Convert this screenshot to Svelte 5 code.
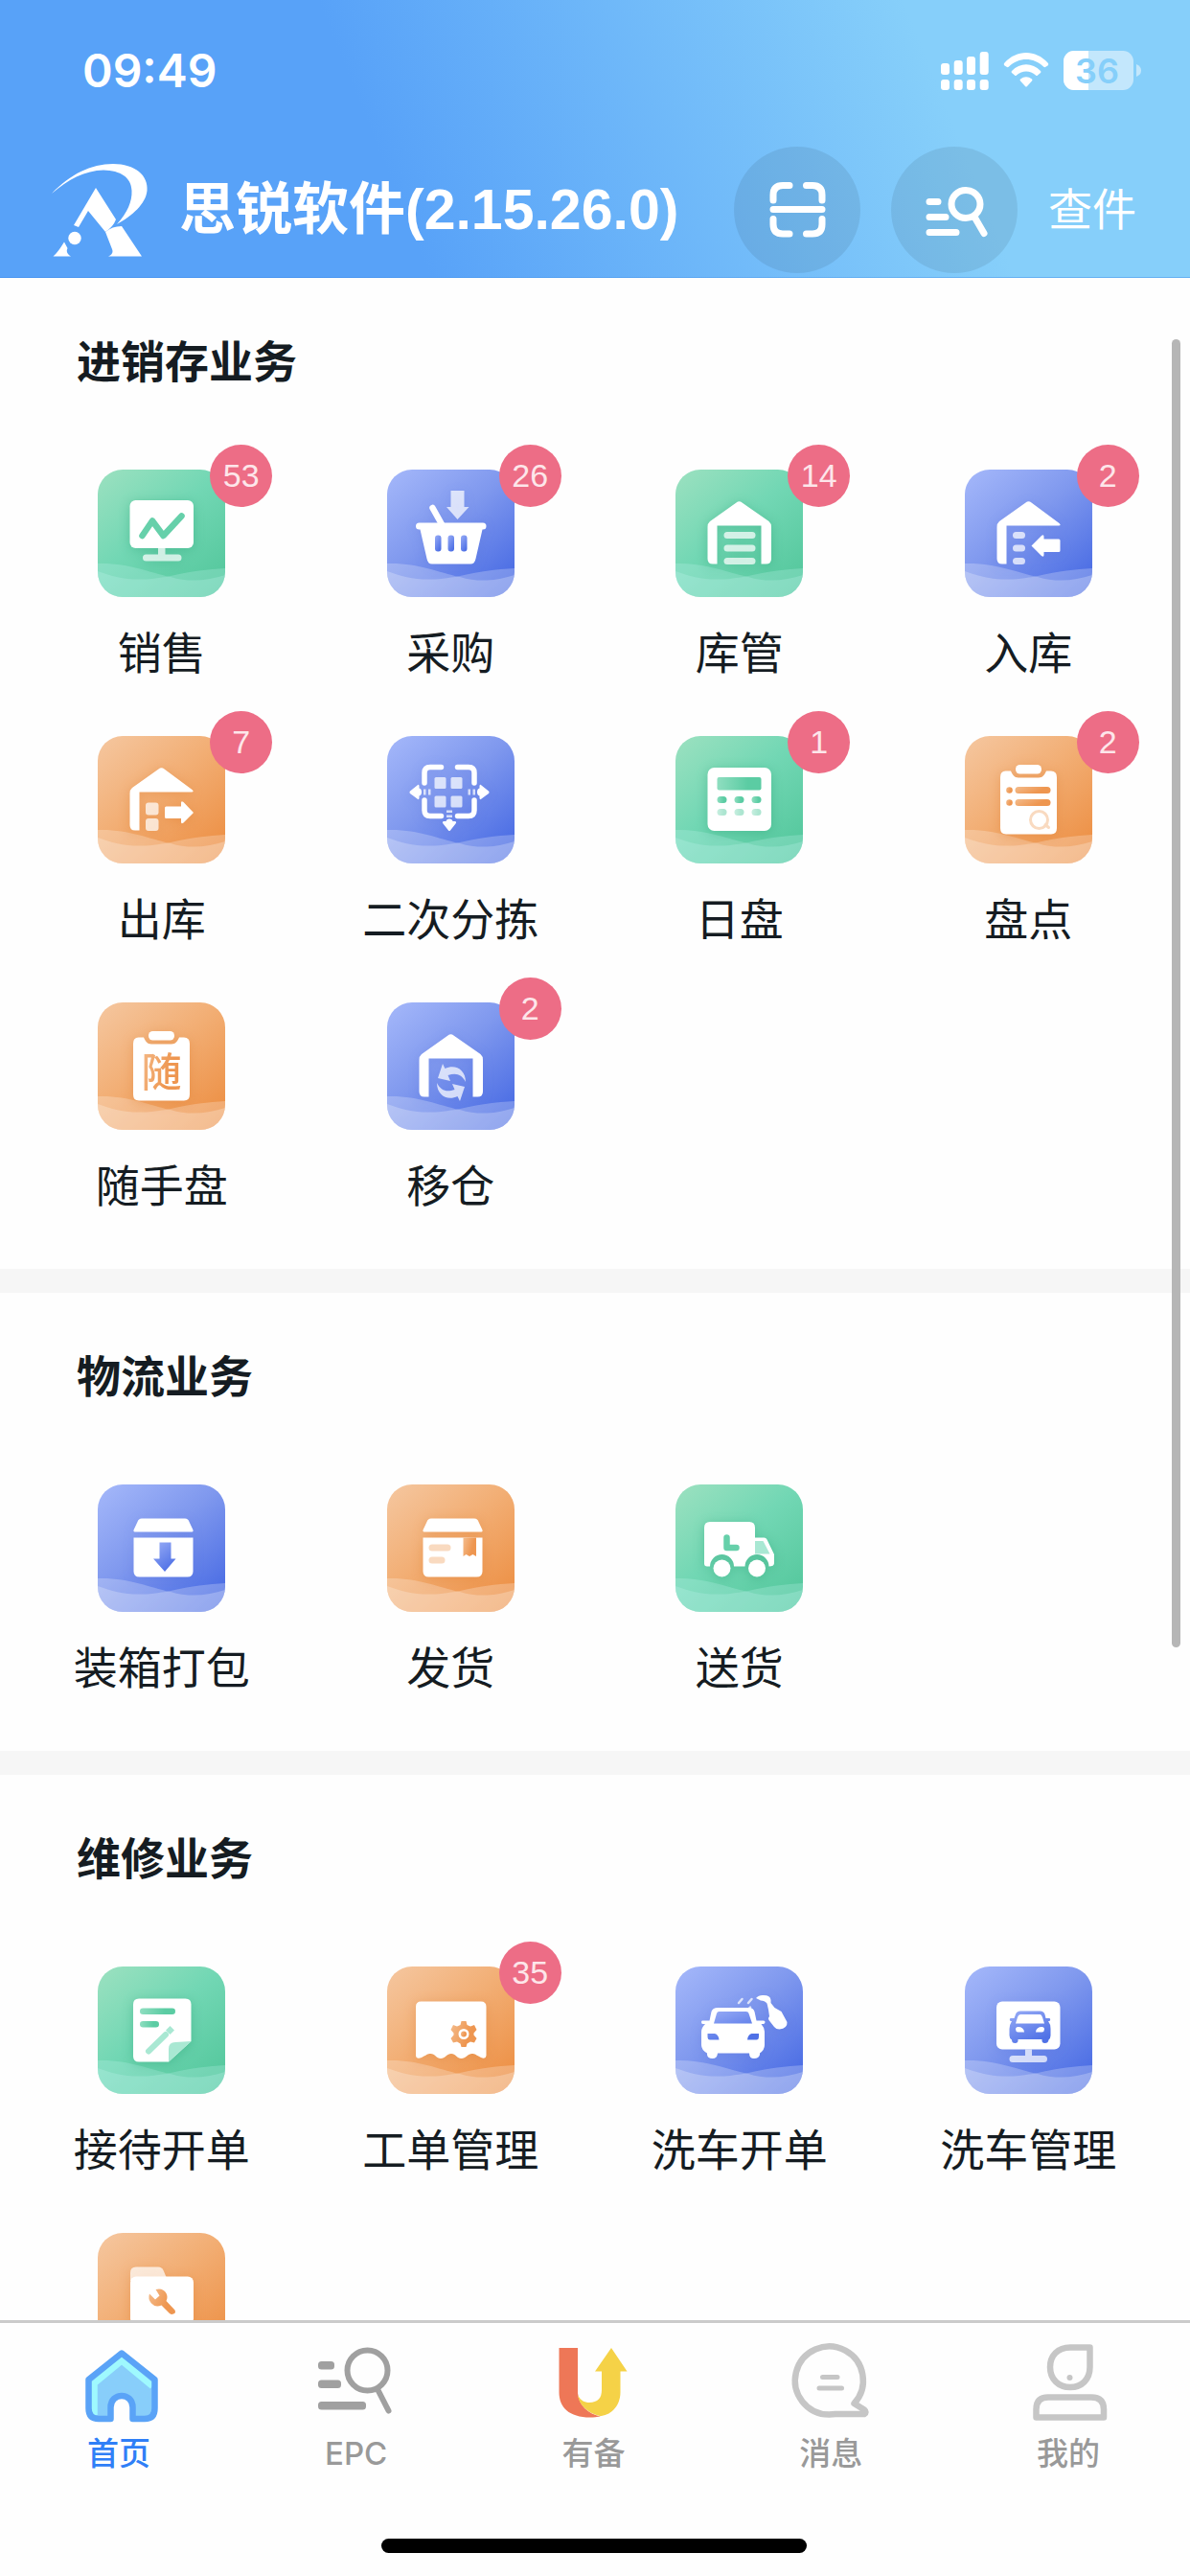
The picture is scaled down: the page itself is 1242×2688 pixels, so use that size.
<script>
  const sections = [
    {
      title: '进销存业务',
      items: [
        { label: '销售', tone: 'green', icon: 'sales', badge: 53 },
        { label: '采购', tone: 'blue', icon: 'basket', badge: 26 },
        { label: '库管', tone: 'green', icon: 'warehouse', badge: 14 },
        { label: '入库', tone: 'blue', icon: 'inbound', badge: 2 },
        { label: '出库', tone: 'orange', icon: 'outbound', badge: 7 },
        { label: '二次分拣', tone: 'blue', icon: 'sort' },
        { label: '日盘', tone: 'green', icon: 'daily', badge: 1 },
        { label: '盘点', tone: 'orange', icon: 'count', badge: 2 },
        { label: '随手盘', tone: 'orange', icon: 'quick' },
        { label: '移仓', tone: 'blue', icon: 'move', badge: 2 }
      ]
    },
    {
      title: '物流业务',
      items: [
        { label: '装箱打包', tone: 'blue', icon: 'pack' },
        { label: '发货', tone: 'orange', icon: 'ship' },
        { label: '送货', tone: 'green', icon: 'truck' }
      ]
    },
    {
      title: '维修业务',
      items: [
        { label: '接待开单', tone: 'green', icon: 'reception' },
        { label: '工单管理', tone: 'orange', icon: 'workorder', badge: 35 },
        { label: '洗车开单', tone: 'blue', icon: 'wash' },
        { label: '洗车管理', tone: 'blue', icon: 'washscreen' },
        { tone: 'orange', icon: 'folder' }
      ]
    }
  ];

  const tabs = [
    { label: '首页', icon: 'home', active: true },
    { label: 'EPC', icon: 'epc' },
    { label: '有备', icon: 'youbei' },
    { label: '消息', icon: 'message' },
    { label: '我的', icon: 'me' }
  ];
</script>

<svg class="defs" width="0" height="0" aria-hidden="true">
  <defs>
    <linearGradient id="ink-green" x1="0" y1="0" x2="1" y2="0">
      <stop offset="0" stop-color="#8fdec0" /><stop offset="0.7" stop-color="#5bcca3" />
    </linearGradient>
    <linearGradient id="ink-blue" x1="0" y1="0" x2="0.6" y2="1">
      <stop offset="0" stop-color="#98acf6" /><stop offset="1" stop-color="#4f71e6" />
    </linearGradient>
    <linearGradient id="ink-orange" x1="0" y1="0" x2="1" y2="0.4">
      <stop offset="0" stop-color="#f4bc8c" /><stop offset="0.8" stop-color="#ee9650" />
    </linearGradient>
  </defs>
</svg>

{#snippet house()}
  <path d="M63.500 34.500Q66.500 32 69.500 34.500L97.500 54Q100 56 100 60V93Q100 98.500 94.500 98.500H89.500V58.500H43.500V98.500H39Q33.500 98.500 33.500 93V60Q33.500 56 36 54Z" />
{/snippet}

{#snippet halfHouse()}
  <path d="M63.500 34.500Q66.500 32 69.500 34.500L98.500 56Q101 58.500 98 58.500H43.500V98.500H39Q33.500 98.500 33.500 93V60Q33.500 56 36 54Z" />
{/snippet}

{#snippet clipboard()}
  <rect x="53" y="30" width="27" height="9.500" rx="4.500" />
  <path d="M42.500 36.500H48C49.500 40 51.500 43.500 56 43.500H77C81.500 43.500 83.500 40 85 36.500H90Q96 36.500 96 43V96Q96 102.500 90 102.500H43Q37 102.500 37 96V43Q37 36.500 42.500 36.500Z" />
{/snippet}

{#snippet glyph(name)}
  {#if name === 'sales'}
    <rect x="33.500" y="32" width="66.500" height="50" rx="6" />
    <path class="soft" d="M63 82H70.500V88.500H84A3.500 3.500 0 0 1 84 95.500H50.500A3.500 3.500 0 0 1 50.500 88.500H63Z" />
    <path class="ink-line" d="M46.500 69L57 53.500L68.500 69L87.500 48.500" stroke-width="6.500" />
  {:else if name === 'basket'}
    <path class="soft" d="M66.500 22H80.500V39H85.500L73.500 52L62 39H66.500Z" />
    <path class="line" d="M47.500 40L57 57" stroke-width="6.500" />
    <path d="M33.500 55.500H100A3.500 3.500 0 0 1 100 62.500H99.500L92.500 93Q91.500 98.500 87 98.500H47Q42.500 98.500 41.500 93L34.500 62.500H33.500A3.500 3.500 0 0 1 33.500 55.500Z" />
    <g class="ink">
      <rect x="50" y="68.500" width="6.500" height="17" rx="3" />
      <rect x="63.500" y="68.500" width="6.500" height="17" rx="3" />
      <rect x="77" y="68.500" width="6.500" height="17" rx="3" />
    </g>
  {:else if name === 'warehouse'}
    {@render house()}
    <g class="soft">
      <rect x="50.500" y="65" width="33" height="7" rx="3.500" />
      <rect x="50.500" y="78.500" width="33" height="7" rx="3.500" />
      <rect x="50.500" y="92" width="33" height="7" rx="3.500" />
    </g>
  {:else if name === 'inbound'}
    {@render halfHouse()}
    <g class="soft">
      <rect x="50" y="65" width="13" height="7" rx="3.500" />
      <rect x="50" y="78.500" width="13" height="7" rx="3.500" />
      <rect x="50" y="92" width="13" height="7" rx="3.500" />
    </g>
    <path d="M69.500 79.500L80 69Q82.500 67 82.500 70V72.500H98Q99.500 72.500 99.500 74V84.500Q99.500 86 98 86H82.500V89Q82.500 92 80 90Z" />
  {:else if name === 'outbound'}
    {@render halfHouse()}
    <g class="soft">
      <rect x="50" y="69.500" width="13.500" height="13" rx="3" />
      <rect x="50" y="86" width="13.500" height="13" rx="3" />
    </g>
    <path d="M100 80L89.500 69Q87 67 87 70V73.500H71.500Q70 73.500 70 75V84.500Q70 86 71.500 86H87V89.500Q87 92.500 89.500 90.500Z" />
  {:else if name === 'sort'}
    <path class="line" stroke-width="5.500" d="M56.500 32.500H45Q39 32.500 39 38.500V49M73.500 32.500H85Q91 32.500 91 38.500V49M39 67V77.500Q39 83.500 45 83.500H56.500M91 67V77.500Q91 83.500 85 83.500H73.500" />
    <g class="soft">
      <rect x="49.500" y="43" width="12" height="12" rx="1.500" />
      <rect x="66.500" y="43" width="12" height="12" rx="1.500" />
      <rect x="49.500" y="62.500" width="12" height="12" rx="1.500" />
      <rect x="66.500" y="62.500" width="12" height="12" rx="1.500" />
      <path d="M38 55.500h2.500v6h-2.500zM43 55.500h2.500v6h-2.500zM84.500 55.500h2.500v6h-2.500zM89.500 55.500h2.500v6h-2.500zM62 77.500h6v2.500h-6zM62 82.500h6v2.500h-6z" />
    </g>
    <path d="M24 60L31.500 65.500Q33 67 33.500 65V62.500Q36 62 36 58.500T33.500 54.500V52Q33 50 31.500 51.500L24 57.500Q23 58.500 24 60ZM106 60L98.500 65.500Q97 67 96.500 65V62.500Q94 62 94 58.500T96.500 54.500V52Q97 50 98.500 51.500L106 57.500Q107 58.500 106 60ZM64 98.500L58.500 91.500Q57 89.500 59 89H61.500Q62 86.500 65 86.500T68.500 89H71Q73 89.500 71.500 91.500L66 98.500Q65 99.500 64 98.500Z" />
  {:else if name === 'daily'}
    <rect x="33.500" y="33" width="66.500" height="66" rx="7" />
    <g class="ink">
      <rect x="43.500" y="43" width="46" height="13.500" rx="2" />
      {#each [43.5, 61.5, 79.5] as x}
        <rect {x} y="63" width="10" height="7" rx="3.500" />
        <rect {x} y="76" width="10" height="7" rx="3.500" opacity="0.500" />
      {/each}
    </g>
  {:else if name === 'count'}
    {@render clipboard()}
    <g class="ink">
      <circle cx="46.500" cy="56.500" r="3.300" />
      <rect x="52.500" y="53" width="37" height="7" rx="3.500" />
      <circle cx="46.500" cy="69.500" r="3.300" />
      <rect x="52.500" y="66" width="37" height="7" rx="3.500" />
    </g>
    <path class="pale-line" stroke-width="3" d="M86.500 87.500A9 9 0 1 1 68.500 87.500A9 9 0 1 1 86.500 87.500M84 92.500L87.500 95.500" />
  {:else if name === 'quick'}
    {@render clipboard()}
    <text class="ink" x="66.500" y="88" text-anchor="middle">随</text>
  {:else if name === 'move'}
    {@render house()}
    <g class="soft">
      <path d="M53 79L58 64L60.500 69C71 64 82 70 82 83C78 75 72 73 63.500 76L66 82Z" />
      <path d="M81 88L76 103L73.500 98C63 103 52 97 52 84C56 92 62 94 70.500 91L68 85Z" />
    </g>
  {:else if name === 'pack' || name === 'ship'}
    <path d="M46 35.500H91Q94.500 35.500 95.500 39L99.500 47.500Q100 49.500 98.500 49.500H38.500Q37 49.500 37.500 47.500L41.500 39Q42.500 35.500 46 35.500Z" />
    <path d="M38 55.500H99.500V90.500Q99.500 96.500 93.500 96.500H43.500Q37.500 96.500 37.500 90.500V55.500Z" />
    {#if name === 'pack'}
      <path class="ink" d="M64.500 60.500H76.500V77.500H81.500L70 91L58 77.500H64.500Z" />
    {:else}
      <path class="ink" d="M79.500 55.500H93V75L89.500 73L86 75L82.500 73L79.500 75Z" />
      <g class="pale">
        <rect x="43.500" y="62.500" width="23" height="7" rx="3.500" />
        <rect x="43.500" y="75.500" width="17" height="7" rx="3.500" />
      </g>
    {/if}
  {:else if name === 'truck'}
    <path d="M36 39H77Q83 39 83 45V55.500H92.500Q94.500 55.500 95.500 57.500L103 73V82Q103 85.500 97.500 85.500A12.500 12.500 0 0 0 72.500 85.500H61A12.500 12.500 0 0 0 36 85.500H33Q30 85.500 30 82.500V45Q30 39 36 39Z" />
    <path class="pale" d="M83 59H91.500L98.500 72.500H83Z" />
    <circle cx="48.500" cy="87.500" r="9" />
    <circle cx="85" cy="87.500" r="9" />
    <path class="ink-line" stroke-width="6.500" d="M53.500 55.500V66H63.500" />
  {:else if name === 'reception'}
    <path d="M43 33.500H91.500Q97.500 33.500 97.500 39.500V78L74 99.500H43Q37 99.500 37 93.500V39.500Q37 33.500 43 33.500Z" />
    <path class="pale" d="M97.500 78L74 99.500V86Q74 79 81 79Z" />
    <g class="ink">
      <rect x="44" y="43.500" width="37" height="6.500" rx="3.200" />
      <rect x="44" y="57" width="20" height="6.500" rx="3.200" />
    </g>
    <path class="pale-line" stroke-width="6" d="M53 88.500L71 71" />
    <path class="pale" d="M71 66.500L75.500 62L80 66.500L75.500 71Z" />
  {:else if name === 'workorder'}
    <path d="M35.500 36.500H98Q103.500 36.500 103.500 42V93Q103 97 98 95C93 92.500 92 91 88.500 91C84.500 91 82 96 77.500 96C73 96 71.500 91 67 91C62.500 91 60.500 96 56 96C51.500 96 50 91 45.500 91C42 91 41 92.500 36 95Q30.500 97 30 93V42Q30 36.500 35.500 36.500Z" />
    <path class="ink" fill-rule="evenodd" d="M77.500 57H82.500L83.500 61L87 62.500L91 61L93.500 66L90.500 69.500V71.500L93.500 75L91 79.500L87 78.500L83.500 80.500L82.500 84H77.500L76.500 80.500L73 78.500L69 79.500L66.500 75L69.500 71.500V69.500L66.500 66L69 61L73 62.500L76.500 61ZM80 65A5.500 5.500 0 1 0 80 76A5.500 5.500 0 1 0 80 65Z" />
    <circle class="ink" cx="80" cy="70.500" r="3" />
  {:else if name === 'wash'}
    <path d="M44 43H77Q81 43 82.500 47L84.500 56.500H92Q93.500 56.500 93.500 58T92 60H89.500Q93 64 93 68V82Q93 87 88 90.500V92Q87 96 82 96T77 90.500H44Q43.500 96 38.500 96T33 92V90.500Q27 87 27 82V68Q27 64 31 60H28.500Q27 60 27 58T28.500 56.500H35.500L37.500 47Q39 43 44 43Z" />
    <path class="ink" d="M45.500 47H74Q76 47 76.500 49L80 59.500H40L43 49Q43.500 47 45.500 47ZM33.500 70H41Q45 71 45.500 76.500H36Q33.500 76.500 33.500 73ZM87 70H79.500Q75.500 71 75 76.500H84.500Q87 76.500 87 73Z" />
    <path d="M84 33Q87 29.500 92 30Q99 30 99.500 35V38L103.500 43L110.500 47L116.500 58Q117 64.500 108.500 65.500Q105 65.500 103 63L97.500 56Q96 54 98 52L97 45L95.500 38.500Q93 35.500 89 35.500Z" />
    <path class="soft-line" stroke-width="2.500" d="M66 38L69.500 34M76 38L79.500 34M75 46L78 42.500" />
  {:else if name === 'washscreen'}
    <rect x="33" y="36.500" width="66.500" height="50" rx="6" />
    <path class="soft" d="M63 86.500H70V93H82.500A3.500 3.500 0 0 1 82.500 100H50A3.500 3.500 0 0 1 50 93H63Z" />
    <path class="ink" fill-rule="evenodd" d="M58 46.500H78.500Q82.500 46.500 83.500 50L84.500 54H88.500Q90 55 88.500 57H87Q90 61 89.500 65V72Q89.500 75 87.500 76.500Q87 80 83.500 80T80.500 76H55.500Q56 80 52.500 80T49 76.500Q46.500 75 46.500 72V65Q46.500 61 49 57H47.500Q46 55 47.500 54H51.500L53 50Q54 46.500 58 46.500ZM58.500 50Q56 50 55 53L53 59.500H83L81 53Q80 50 78.500 50ZM55.500 63Q53 63 53 65.500T55.500 68.500H62Q61.500 63 55.500 63ZM80.500 63Q83 63 83 65.500T80.500 68.500H74Q74.500 63 80.500 63Z" />
  {:else if name === 'folder'}
    <path class="soft" d="M40 35.500H63Q67 35.500 68.500 39L71.500 46V50H34V41.500Q34 35.500 40 35.500Z" />
    <rect x="34" y="45.500" width="66" height="50" rx="6" />
    <path class="ink" d="M60.500 59Q68 57 71.500 63Q73.500 67 71.500 71L80.500 80.500Q82 83.500 79 84.500Q77 85.500 75 84L66.500 75.500Q60 78 56 73.500Q52 69 54 63.500L60 69.500L64.500 65.500Z" />
  {/if}
{/snippet}

<div class="app">
  <header class="top">
    <div class="status">
      <time>09:49</time>
      <div class="status-icons">
        <svg width="50" height="42" viewBox="0 0 50 42" fill="#fff" aria-hidden="true">
          <rect x="0" y="13" width="9" height="12" rx="3" /><rect x="13.700" y="10" width="9" height="15" rx="3" />
          <rect x="27" y="6" width="9" height="19" rx="3" /><rect x="40.700" y="1" width="9" height="24" rx="3" />
          <rect x="0" y="30" width="9" height="11" rx="3" /><rect x="13.700" y="30" width="9" height="11" rx="3" />
          <rect x="27" y="30" width="9" height="11" rx="3" /><rect x="40.700" y="30" width="9" height="11" rx="3" />
        </svg>
        <svg width="48" height="42" viewBox="0 0 48 42" fill="#fff" aria-hidden="true">
          <path d="M1.500 12.500C14-1.500 34-1.500 46.500 12.500Q48 14 46.500 15.500L44 17Q43 17.500 42 16.500C32 6.500 16 6.500 6 16.500Q5 17.500 4 17L1.500 15.500Q0 14 1.500 12.500Z" />
          <path d="M9 21C17.500 12 30.500 12 39 21Q40 22 39 23L36 25.500Q35 26.500 34 25.500C28 20 20 20 14 25.500Q13 26.500 12 25.500L9 23Q8 22 9 21Z" />
          <path d="M18 29.500Q24 25 30 29.500Q31 30.500 30 31.500L25 37Q24 38 23 37L18 31.500Q17 30.500 18 29.500Z" />
        </svg>
        <svg width="81" height="58" viewBox="0 -8 81 58" aria-hidden="true">
          <rect x="0" y="0" width="73" height="41" rx="11" fill="#c3e7fc" />
          <path d="M11 0H26V41H11A11 11 0 0 1 0 30V11A11 11 0 0 1 11 0Z" fill="#fff" />
          <path d="M76 14Q81 16 81 20.500T76 27Z" fill="#c3e7fc" />
          <text class="charge" x="35" y="34" text-anchor="middle">36</text>
        </svg>
      </div>
    </div>
    <div class="bar">
      <svg class="logo" width="104" height="104" viewBox="0 0 104 104" fill="#fff" role="img" aria-label="思锐软件">
        <path d="M3 35C22 15 44 4 67 4C90 4 104 16 102.500 32C101 46 87 58 71 67C82 55 87 43 86.500 32C86 18 75 11 57 10.500C38 11 20 20 3 35Z" />
        <path d="M49 29L70 62Q67 70 59 75L41 53L31 70L26 68Z" />
        <path d="M59 75Q66 69 76 69L97 100.500H62Q68 98 66 93Z" />
        <circle cx="27" cy="81.500" r="6.700" />
        <path d="M16 85.500L19.500 92Q17 97 23 100.500H4.500Q9 97 16 85.500Z" />
      </svg>
      <h1>思锐软件(2.15.26.0)</h1>
      <button class="round" aria-label="扫一扫">
        <svg viewBox="0 0 132 132" aria-hidden="true">
          <path d="M58 40.500H51Q41 40.500 41 50.500V56M75.500 40.500H82Q92 40.500 92 50.500V56M41 75.500V81Q41 91 51 91H58M92 75.500V81Q92 91 82 91H75.500M41 65.500H92" />
        </svg>
      </button>
      <button class="round" aria-label="搜索">
        <svg viewBox="0 0 132 132" aria-hidden="true">
          <path d="M40 57.500H49M40 73.500H57M40 89.500H68M88 75L97 90.500" />
          <ellipse cx="78" cy="60" rx="15" ry="14.500" />
        </svg>
      </button>
      <a class="find" href="#find">查件</a>
    </div>
  </header>

  <main>
    {#each sections as section}
      <section>
        <h2>{section.title}</h2>
        <div class="grid">
          {#each section.items as item}
            <a class="item" href="#{item.icon}" aria-label={item.label ?? item.icon}>
              <span class="tile {item.tone}">
                <svg viewBox="0 0 133 133" aria-hidden="true">
                  <g class="wave">
                    <path d="M0 98C32 97 52 107 76 112C95 118 115 116 133 110V133H0Z" />
                    <path d="M0 106C22 114 40 118 76 111C98 106 115 104 133 103V133H0Z" />
                  </g>
                  <g class="art">{@render glyph(item.icon)}</g>
                </svg>
                {#if item.badge}<span class="badge">{item.badge}</span>{/if}
              </span>
              {#if item.label}<span class="label">{item.label}</span>{/if}
            </a>
          {/each}
        </div>
      </section>
    {/each}
    <div class="thumb" aria-hidden="true"></div>
  </main>

  <footer>
    <nav>
      {#each tabs as tab}
        <a class="tab" class:active={tab.active} href="#{tab.icon}">
          <svg width="90" height="90" viewBox="0 0 90 90" fill="none" aria-hidden="true">
            {#if tab.icon === 'home'}
              <path fill="#88cefa" d="M48 15.500L82.500 43V73Q82.500 84 72 84H59.500V72C59.500 56 36.500 56 36.500 72V84H24Q13.500 84 13.500 73V43Z" />
              <path stroke="#9ff9fe" stroke-width="6.500" d="M19.500 80V47L48 23.500L80 50" />
              <path stroke="#5aa3f7" stroke-width="6.500" stroke-linejoin="round" d="M48 15.500L82.500 43V73Q82.500 84 72 84H59.500V72C59.500 56 36.500 56 36.500 72V84H24Q13.500 84 13.500 73V43Z" />
            {:else if tab.icon === 'epc'}
              <g fill="#a0a0a0">
                <rect x="5" y="24" width="17" height="8.500" rx="3.500" />
                <rect x="5" y="43.500" width="24" height="8.500" rx="3.500" />
                <rect x="5" y="66" width="50" height="8.500" rx="3.500" />
              </g>
              <path stroke="#a0a0a0" stroke-width="6" stroke-linecap="round" d="M77.500 33.500A21 21 0 1 1 35.500 33.500A21 21 0 1 1 77.500 33.500M67 53L78.500 75.500" />
            {:else if tab.icon === 'youbei'}
              <path fill="#ee7757" d="M9.500 10H29V57C30 70 40 79 53 81.500C50 82 45 82.500 42 82.500C20 82.500 9.500 72 9.500 56Z" />
              <path fill="#f5d247" d="M64 10L80.500 34.500H73.500V56C73.500 72 62 81 52 81C38 78 30 68 29 59C32 66 38 67 41 67C50 67 54 62 54 54V34.500H47Z" />
            {:else if tab.icon === 'message'}
              <g stroke="#c6c6c6" stroke-linecap="round" stroke-linejoin="round">
                <path stroke-width="6.500" d="M69.500 68A35.500 35.500 0 1 0 43.500 79.500L50 79H80Q83 77 80 74.500Z" />
                <path stroke-width="5" d="M36.500 40.500H52M33 52H56.500" />
              </g>
            {:else}
              <g stroke="#c6c6c6" stroke-width="6.500" stroke-linejoin="round">
                <path d="M67.500 9.500H47C34 9.500 26 18 26 30C26 43 35 51 47 51C59 51 67.500 43 67.500 30Z" />
                <path d="M11.500 82.500V74Q11.500 61.500 24 61.500H69Q82 61.500 82 74V82.500Z" />
              </g>
              <circle cx="46.500" cy="41" r="3" fill="#c6c6c6" />
            {/if}
          </svg>
          <span>{tab.label}</span>
        </a>
      {/each}
    </nav>
    <div class="home-bar" aria-hidden="true"></div>
  </footer>
</div>

<style>
  :global(body) {
    margin: 0;
    background: #fefefe;
  }

  .defs {
    position: absolute;
  }

  .app {
    display: flex;
    flex-direction: column;
    height: 100vh;
    overflow: hidden;
    color: #151c22;
    font-family: 'Liberation Sans', 'Noto Sans CJK SC', sans-serif;
  }

  a {
    color: inherit;
    text-decoration: none;
  }

  .top {
    flex: none;
    box-sizing: border-box;
    color: #fff;
    background: linear-gradient(68deg, #58a2f8 33%, #86cffa 78%);
    border-bottom: 1px solid rgba(50, 130, 230, 0.4);
  }

  .status {
    display: flex;
    align-items: center;
    justify-content: space-between;
    height: 148px;
    padding: 0 51px 0 86px;
  }

  time {
    font: 600 48px/56px Inter, sans-serif;
  }

  .status-icons {
    display: flex;
    align-items: center;
    gap: 15px;
  }

  .charge {
    font: 600 36px Inter, sans-serif;
    fill: #86cffa;
  }

  .bar {
    display: flex;
    align-items: center;
    gap: 32px;
    height: 141px;
    padding: 0 56px 0 51px;
  }

  .logo {
    flex: none;
  }

  h1 {
    flex: 1;
    margin: 0;
    font-size: 59px;
    line-height: 72px;
    font-weight: 700;
    white-space: nowrap;
  }

  .round {
    flex: none;
    width: 132px;
    height: 132px;
    padding: 0;
    border: 0;
    border-radius: 50%;
    background: rgba(0, 0, 0, 0.08);
  }

  .round svg {
    display: block;
    fill: none;
    stroke: #fff;
    stroke-width: 7;
    stroke-linecap: round;
  }

  .find {
    font-size: 46px;
    line-height: 60px;
    font-weight: 400;
    white-space: nowrap;
  }

  main {
    position: relative;
    flex: 1;
    min-height: 0;
    overflow: hidden;
  }

  section + section {
    border-top: 25px solid #f6f6f6;
  }

  h2 {
    margin: 0;
    padding: 56px 80px 80px;
    font-size: 46px;
    line-height: 64px;
    font-weight: 600;
  }

  .grid {
    display: grid;
    grid-template-columns: repeat(4, 1fr);
    padding: 0 18px;
  }

  .item {
    display: flex;
    flex-direction: column;
    align-items: center;
    gap: 29px;
    padding-bottom: 56px;
  }

  .label {
    font-size: 46px;
    line-height: 60px;
    white-space: nowrap;
  }

  .tile {
    position: relative;
    width: 133px;
    height: 133px;
    border-radius: 26px;
  }

  .tile svg {
    display: block;
    border-radius: 26px;
  }

  .green {
    --ink: url(#ink-green);
    --line: #66d0aa;
    --pale: #a9e8d3;
    --wave: #c8f7f2;
    --shade: rgba(40, 160, 115, 0.4);
    background: linear-gradient(140deg, #9ce1c0, #72d7b4 45%, #50c599);
  }

  .blue {
    --ink: url(#ink-blue);
    --line: #6f8cec;
    --pale: #c3cff9;
    --wave: #ffffff;
    --shade: rgba(60, 90, 210, 0.15);
    background: linear-gradient(140deg, #a5b8fa, #7f98ee 45%, #4064e2);
  }

  .orange {
    --ink: url(#ink-orange);
    --line: #ef9f60;
    --pale: #f9dac0;
    --wave: #ffffff;
    --shade: rgba(220, 120, 40, 0.35);
    background: linear-gradient(140deg, #f5c7a0, #f2ae74 45%, #ec8b3d);
  }

  .wave {
    fill: var(--wave);
    fill-opacity: 0.24;
  }

  .art {
    fill: #fff;
    filter: drop-shadow(0 2px 6px var(--shade));
  }

  .art :is(.soft) {
    fill-opacity: 0.72;
  }

  .art :is(.ink) {
    fill: var(--ink);
  }

  .art :is(.pale) {
    fill: var(--pale);
  }

  .art :is(.line, .soft-line, .ink-line, .pale-line) {
    fill: none;
    stroke: #fff;
    stroke-linecap: round;
    stroke-linejoin: round;
  }

  .art :is(.soft-line) {
    stroke-opacity: 0.72;
  }

  .art :is(.ink-line) {
    stroke: var(--line);
  }

  .art :is(.pale-line) {
    stroke: var(--pale);
  }

  .art text {
    font: 500 42px 'Noto Sans CJK SC', sans-serif;
  }

  .badge {
    position: absolute;
    top: -26px;
    left: 117px;
    width: 65px;
    height: 65px;
    border-radius: 50%;
    background: #ed6d86;
    color: #fde6ea;
    font-size: 34px;
    line-height: 65px;
    text-align: center;
  }

  .thumb {
    position: absolute;
    top: 64px;
    right: 10px;
    width: 9px;
    height: 1365px;
    border-radius: 5px;
    background: #b6b6b6;
  }

  footer {
    flex: none;
    border-top: 3px solid #cbcbcb;
    padding: 16px 3px 24px 0;
    background: #fefefe;
  }

  nav {
    display: grid;
    grid-template-columns: repeat(5, 1fr);
  }

  .tab {
    display: flex;
    flex-direction: column;
    align-items: center;
    gap: 10px;
    color: #999;
    font: 500 33px/40px Inter, 'Noto Sans CJK SC', sans-serif;
  }

  .active {
    color: #2f7ff7;
  }

  .home-bar {
    width: 444px;
    height: 15px;
    margin: 69px auto 0;
    border-radius: 8px;
    background: #000;
  }
</style>
